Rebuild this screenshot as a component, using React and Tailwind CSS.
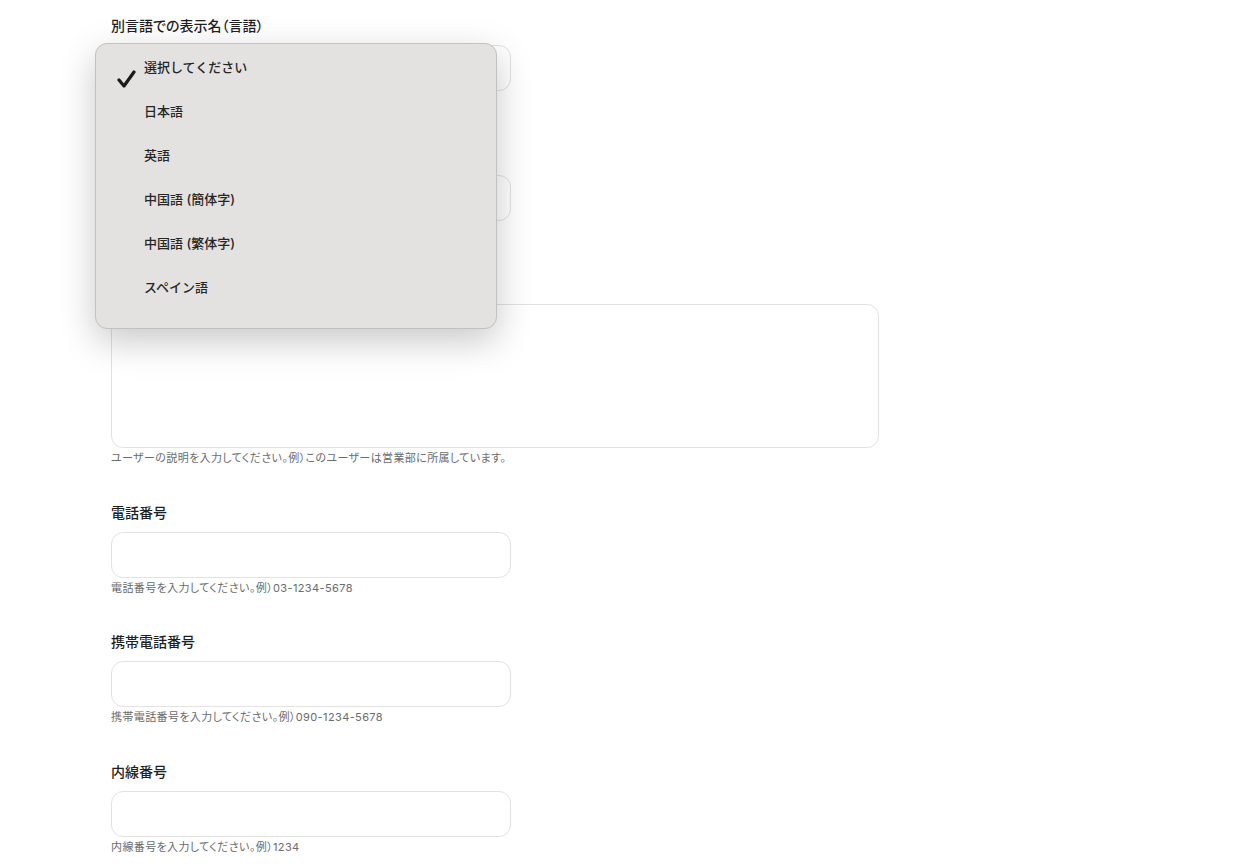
const FONT = "font-['Inter','Noto_Sans_CJK_JP',sans-serif]";

const LANGS = ["選択してください", "日本語", "英語", "中国語 (簡体字)", "中国語 (繁体字)", "スペイン語"];

function Field({ label, help, tall, wide, children }) {
  return (
    <div className="relative flex flex-col">
      <label className="h-5 text-sm leading-5 font-medium text-[#1f1f1f] [font-feature-settings:'palt']">{label}</label>
      <div
        className={`mt-[9px] rounded-xl border border-[#e2e2e2] bg-white ${tall ? "h-[144px]" : "h-[46px]"} ${wide ? "w-[768px]" : "w-[400px]"}`}
      />
      {help ? (
        <p className="mt-0.5 h-4 text-[11px] leading-4 tracking-[0.035em] text-[#6b6b6b] [font-feature-settings:'palt']">{help}</p>
      ) : (
        <div className="mt-0.5 h-4" />
      )}
      {children}
    </div>
  );
}

function LanguageMenu() {
  return (
    <div className="absolute left-[-16px] top-[27px] z-10 w-[402px] rounded-xl border border-[#c2c1bf] bg-[#e3e2e0] pt-0.5 pb-[18px] shadow-[0_12px_36px_rgba(0,0,0,0.22)]">
      {LANGS.map((l, i) => (
        <div key={l} className="relative flex h-11 items-center pl-[48px] text-[13px] font-medium text-[#262626]">
          {i === 0 && (
            <svg viewBox="0 0 20 20" className="absolute left-[20px] top-[23px] h-[20px] w-[20px]" fill="none" stroke="#1a1a1a" strokeWidth="3.2" strokeLinecap="round" strokeLinejoin="round">
              <path d="M3 11l5 6L18 3" />
            </svg>
          )}
          {l}
        </div>
      ))}
    </div>
  );
}

export default function App() {
  return (
    <div className={`min-h-screen bg-white pl-[111px] pt-4 ${FONT}`}>
      <div className="flex flex-col gap-[36.5px]">
        <Field label="別言語での表示名（言語）">
          <LanguageMenu />
        </Field>
        <Field label="別言語での表示名" />
        <Field label="説明" tall wide help="ユーザーの説明を入力してください。例）このユーザーは営業部に所属しています。" />
        <Field label="電話番号" help="電話番号を入力してください。例）03-1234-5678" />
        <Field label="携帯電話番号" help="携帯電話番号を入力してください。例）090-1234-5678" />
        <Field label="内線番号" help="内線番号を入力してください。例）1234" />
      </div>
    </div>
  );
}
